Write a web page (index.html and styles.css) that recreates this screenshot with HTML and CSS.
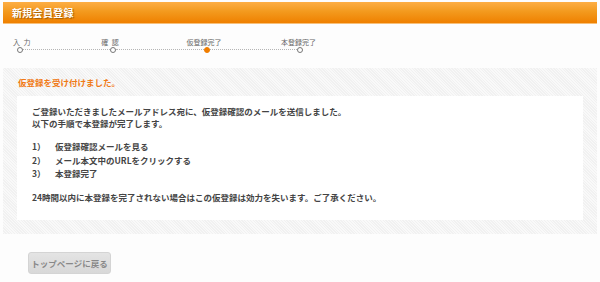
FILE: index.html
```html
<!DOCTYPE html>
<html lang="ja">

<head>
    <meta charset="UTF-8">
    <meta name="viewport" content="width=device-width, initial-scale=1.0">
    <title>新規会員登録</title>
    <link rel="stylesheet" href="styles.css">
</head>

<body>
    <div class="page-header">
        <h1>新規会員登録</h1>
    </div>

    <div class="steps">
        <div class="step">
            <span class="step-label spaced">入 力</span>
            <span class="dot"></span>
        </div>
        <div class="step">
            <span class="step-label spaced">確 認</span>
            <span class="dot"></span>
        </div>
        <div class="step current">
            <span class="step-label">仮登録完了</span>
            <span class="dot"></span>
        </div>
        <div class="step last">
            <span class="step-label">本登録完了</span>
            <span class="dot"></span>
        </div>
    </div>

    <div class="result-box">
        <h2>仮登録を受け付けました。</h2>
        <div class="message">
            <p>ご登録いただきましたメールアドレス宛に、仮登録確認のメールを送信しました。<br>以下の手順で本登録が完了します。</p>
            <ol class="procedure">
                <li><span class="num">1）</span>仮登録確認メールを見る</li>
                <li><span class="num">2）</span>メール本文中のURLをクリックする</li>
                <li><span class="num">3）</span>本登録完了</li>
            </ol>
            <p>24時間以内に本登録を完了されない場合はこの仮登録は効力を失います。ご了承ください。</p>
        </div>
    </div>

    <div class="actions">
        <button class="back-top">トップページに戻る</button>
    </div>
</body>

</html>
```

FILE: styles.css
```css
body {
    margin: 0;
    padding: 2px 3px 0;
    background-color: #fdfdfd;
    font-family: "Noto Sans CJK JP", "Noto Sans", sans-serif;
    color: #444;
}

.page-header {
    height: 21px;
    background: linear-gradient(#fdae45, #f39a1e 45%, #ef8000);
    border-bottom: 1px solid #f7c07a;
    display: flex;
    align-items: center;
    padding-left: 9px;
}

.page-header h1 {
    margin: 0;
    font-size: 10px;
    font-weight: bold;
    color: #fff;
    text-shadow: 1px 1px 1px #a35a00;
    letter-spacing: 0.3px;
}

.steps {
    display: flex;
    padding: 14px 0 0 14px;
    height: 36px;
    box-sizing: border-box;
}

.step {
    position: relative;
    width: 93.3px;
    display: flex;
    flex-direction: column;
    align-items: flex-start;
}

.step-label {
    font-size: 7px;
    line-height: 8px;
    color: #666;
    margin-left: -4px;
    height: 8px;
    white-space: pre;
}

.step-label.spaced {
    letter-spacing: 1px;
}

.step:nth-child(2) .step-label {
    margin-left: -9px;
}

.step.current .step-label {
    margin-left: -17px;
}

.step.last .step-label {
    margin-left: -16px;
}

/* connecting line to the next step */
.step::after {
    content: "";
    position: absolute;
    left: 6px;
    right: 0;
    top: 11px;
    border-top: 1px dotted #b5b5b5;
}

.step.last::after {
    display: none;
}

.dot {
    width: 4px;
    height: 4px;
    margin-top: 1px;
    border: 1px solid #777;
    border-radius: 50%;
    background-color: #fff;
    position: relative;
    z-index: 1;
}

.step.current .dot {
    background-color: #f07d00;
    border-color: #f07d00;
}

.result-box {
    margin-top: 8px;
    background-color: #f6f6f6;
    background-image: repeating-linear-gradient(45deg, #f1f1f1 0, #f1f1f1 1px, #f9f9f9 1px, #f9f9f9 2px);
    padding: 0 14px 14px;
}

.result-box h2 {
    margin: 0;
    height: 28px;
    line-height: 28px;
    padding-left: 1px;
    font-size: 8.5px;
    font-weight: bold;
    color: #f07a16;
}

.message {
    background-color: #fff;
    padding: 10px 15px 17px;
    font-size: 8.5px;
    font-weight: bold;
    color: #444;
}

.message p {
    margin: 0;
    line-height: 11.5px;
}

.procedure {
    list-style: none;
    margin: 11px 0 11px;
    padding: 0;
}

.procedure li {
    line-height: 13.5px;
}

.procedure .num {
    display: inline-block;
    width: 23px;
}

.actions {
    display: flex;
    padding: 18px 0 0 25px;
}

.back-top {
    width: 83px;
    height: 22px;
    border: 1px solid #d4d4d4;
    border-radius: 3px;
    background: linear-gradient(#e4e4e4, #d8d8d8);
    color: #888;
    font-family: inherit;
    font-size: 8.5px;
    font-weight: bold;
    padding: 0;
    cursor: pointer;
}
```
